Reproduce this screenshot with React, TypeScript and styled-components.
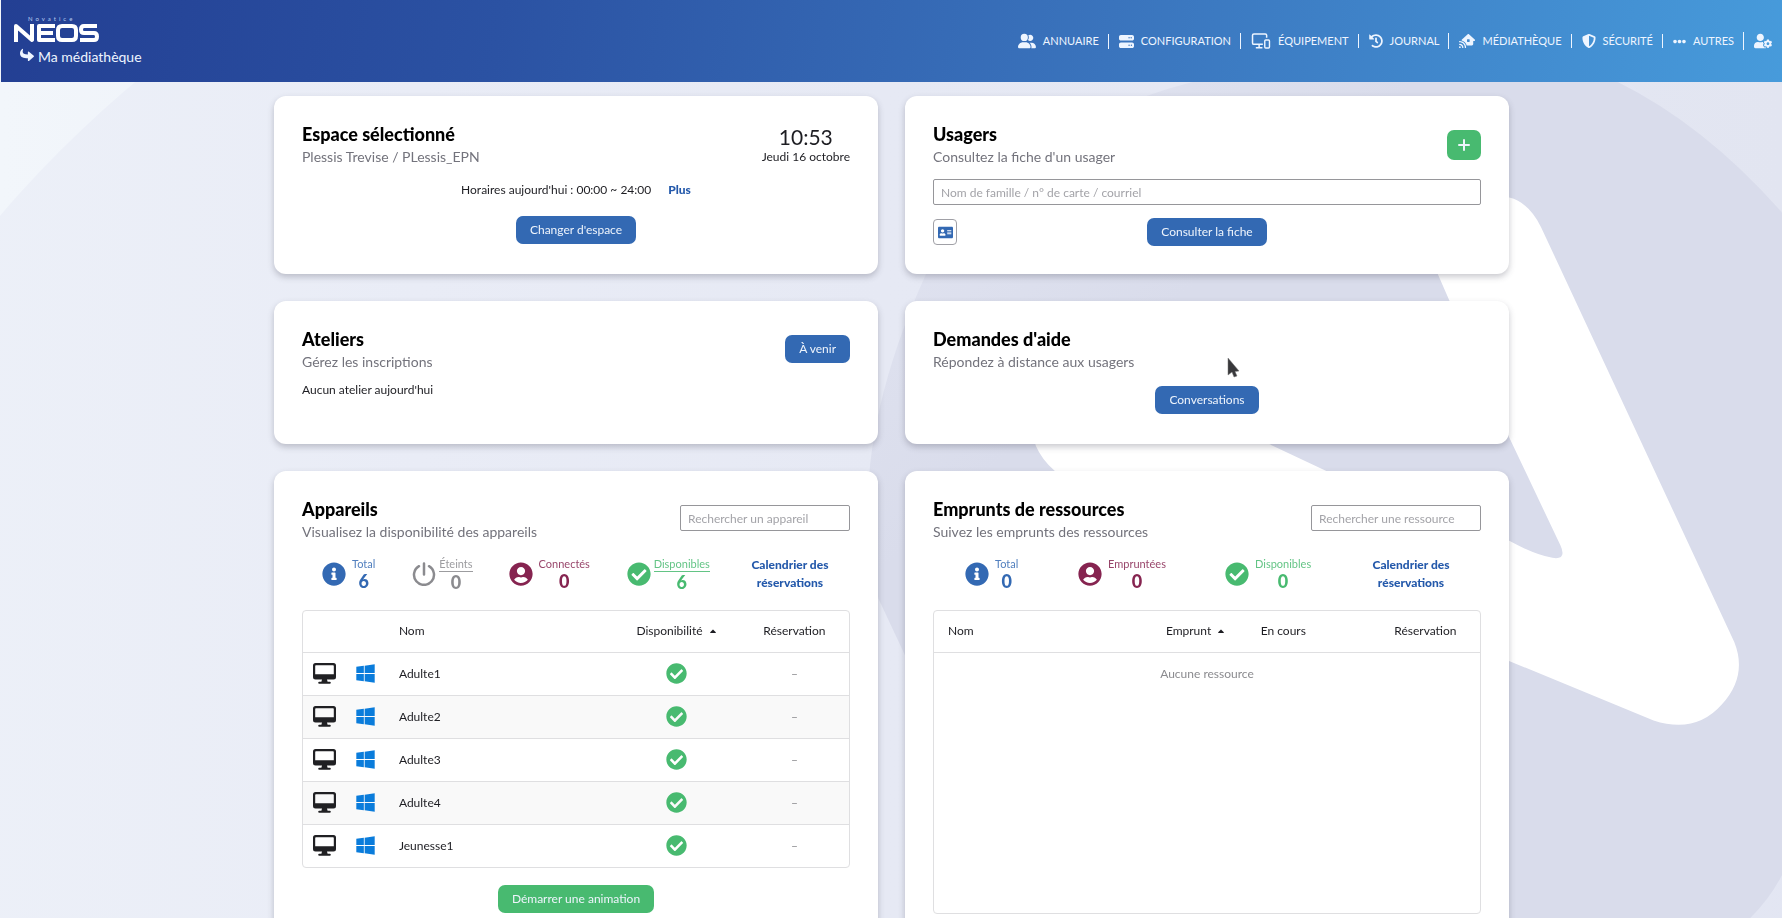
import React from 'react';
import styled, { createGlobalStyle, css } from 'styled-components';
import {
  FaHistory, FaShieldAlt, FaEllipsisH, FaUserCog, FaShare, FaInfoCircle,
  FaUserCircle, FaCheckCircle, FaWindows, FaAddressCard, FaCaretUp,
} from 'react-icons/fa';
import { FaHouseSignal, FaServer, FaUserGroup } from 'react-icons/fa6';

const color = {
  blue: '#3369b3', link: '#2459ab', green: '#48ba70', wine: '#862450', grey: '#8b8b8f',
  text: '#1d1d22', muted: '#73737c', line: '#dfdfe1', win: '#0a7cdb',
};

const GlobalStyle = createGlobalStyle`
  *, *::before, *::after { box-sizing: border-box; }
  html, body { margin: 0; height: 100%; }
  body { font-family: Lato, "Open Sans", sans-serif; font-size: 12px; line-height: 18px; color: ${color.text}; background: #e4e7f2; }
  h2, p { margin: 0; }
  button, input { font: inherit; }
  a { text-decoration: none; }
`;

const Page = styled.div`
  position: relative;
  height: 100vh;
  overflow-y: auto;
  scrollbar-width: none;
  isolation: isolate;
  border-left: 1px solid #a9b3cd;
`;
const Backdrop = styled.svg`
  position: fixed;
  inset: 0;
  width: 100%;
  height: 100%;
  z-index: -1;
`;
const Header = styled.header`
  display: flex;
  justify-content: space-between;
  min-height: 82px;
  padding: 15px 1px 12px 12px;
  color: #eef5ff;
  background: linear-gradient(100deg, #233f93 0%, #2b52a3 28%, #3a74bd 62%, #479bdb 100%);
`;
const Brand = styled.div`
  display: flex;
  flex-direction: column;
  gap: 3px;
`;
const Home = styled.a`
  display: flex;
  align-items: center;
  gap: 4px;
  padding-left: 7px;
  font-size: 14px;
  line-height: 20px;
  color: inherit;
  svg { transform: scaleY(-1); margin-bottom: 4px; }
`;
const Logo = styled.svg`
  width: 88px;
  height: 29px;
`;
const Nav = styled.nav`
  display: flex;
  align-items: center;
  align-self: flex-start;
  height: 52px;
  font-size: 11px;
`;
const NavLink = styled.a`
  display: flex;
  align-items: center;
  gap: 7px;
  padding: 0 9px 0 10px;
  color: inherit;
  line-height: 14px;
  white-space: nowrap;
  & + & { border-left: 1px solid #eef5ff; }
  svg { flex: none; }
`;

const Board = styled.main`
  display: grid;
  grid-template-columns: 1fr 1fr;
  gap: 27px;
  max-width: 1235px;
  margin: 0 auto;
  padding: 14px 0 28px;
`;
const Card = styled.section<{ $min: number }>`
  display: flex;
  flex-direction: column;
  min-width: 0;
  min-height: ${p => p.$min}px;
  padding: 28px;
  border-radius: 12px;
  background: #fff;
  box-shadow: 0 3px 6px rgba(60, 60, 80, .28);
`;
const CardHead = styled.div`
  display: flex;
  justify-content: space-between;
  align-items: flex-start;
`;
const HeadAction = styled.div`
  padding-top: 6px;
`;
const Title = styled.h2`
  font-size: 18px;
  line-height: 20px;
  font-weight: 900;
  color: #000;
`;
const Subtitle = styled.p`
  font-size: 14px;
  line-height: 26px;
  color: ${color.muted};
`;
const Clock = styled.div`
  padding-top: 2px;
  text-align: center;
`;
const Time = styled.div`
  font-size: 21px;
  line-height: 22px;
`;
const Hours = styled.p`
  display: flex;
  justify-content: center;
  gap: 17px;
  margin-top: 10px;
  line-height: 20px;
`;
const Center = styled.div<{ $top: number }>`
  display: flex;
  justify-content: center;
  margin-top: ${p => p.$top}px;
`;
const Button = styled.button<{ $tone?: string }>`
  height: 28px;
  padding: 0 14px;
  border: 0;
  border-radius: 7px;
  color: #eef4fc;
  background: ${p => p.$tone || color.blue};
`;
const AddButton = styled(Button)`
  display: grid;
  place-items: center;
  width: 34px;
  height: 30px;
  padding: 0;
`;
const BoldLink = styled.a`
  font-weight: 900;
  color: ${color.link};
  text-align: center;
`;
const Field = styled.input<{ $width?: number }>`
  display: block;
  width: ${p => (p.$width ? p.$width + 'px' : '100%')};
  height: 26px;
  padding: 0 7px;
  border: 1px solid #96969a;
  border-radius: 2px;
  background: #fff;
  &::placeholder { color: #a3a3a8; opacity: 1; }
`;
const UserForm = styled.form`
  display: grid;
  grid-template-columns: 1fr auto 1fr;
  align-items: center;
  gap: 13px 0;
  margin-top: 9px;
  ${Field} { grid-column: 1 / -1; }
`;
const ScanButton = styled.button`
  display: grid;
  place-items: center;
  width: 24px;
  height: 26px;
  padding: 0;
  border: 1px solid #a0a0a6;
  border-radius: 4px;
  color: ${color.blue};
  background: #fff;
  font-size: 15px;
`;
const Note = styled.p`
  margin-top: 6px;
`;

const Stats = styled.div<{ $columns: string; $start: number }>`
  display: grid;
  grid-template-columns: ${p => p.$columns};
  align-items: center;
  margin-top: 11px;
  padding-left: ${p => p.$start}px;
`;
const Stat = styled.div<{ $tone: string; $underline?: boolean }>`
  display: flex;
  align-items: center;
  gap: ${p => (p.$underline ? 3 : 6)}px;
  color: ${p => p.$tone};
  svg { font-size: 24px; flex: none; }
  dl { margin: 0; text-align: center; }
  dt { font-size: 11px; line-height: 14px; ${p => p.$underline && css`border-bottom: 1px solid;`} opacity: .85; }
  dd { margin: 0; font-size: 18px; line-height: 20px; font-weight: 900; }
`;
const TableBox = styled.div<{ $min?: number }>`
  margin-top: 18px;
  min-height: ${p => p.$min || 0}px;
  border: 1px solid ${color.line};
  border-radius: 4px;
`;
const Table = styled.table`
  width: 100%;
  border-collapse: collapse;
  table-layout: fixed;
  th, td { height: 43px; padding: 0; font-weight: 400; text-align: left; }
  thead th { height: 41px; }
  tbody tr:nth-child(even) { background: #f9f9f9; }
  tr + tr td, tbody tr:first-child td { border-top: 1px solid ${color.line}; }
`;
const Cell = styled.td<{ $faint?: boolean }>`
  && { text-align: center; }
  ${p => p.$faint && css`color: ${color.grey};`}
  svg { display: block; margin: 0 auto; }
`;
const Head = styled.th<{ $left?: number }>`
  ${p => (p.$left === undefined ? css`&& { text-align: center; }` : css`&& { padding-left: ${p.$left}px; }`)}
  svg { margin-left: 2px; font-size: 10px; vertical-align: -1px; }
`;
const Pointer = styled.svg`
  position: fixed;
  left: 1227px;
  top: 357px;
  width: 13px;
  height: 21px;
`;

const Screen = () => (
  <svg width="23" height="21" viewBox="0 0 23 21" fill="#202023" aria-label="Ordinateur">
    <path fillRule="evenodd" d="M2.5 0h18A2.5 2.5 0 0 1 23 2.500v11.500a2.500 2.500 0 0 1-2.500 2.500H14l.6 2.300h2.200a1 1 0 0 1 0 2H6.200a1 1 0 0 1 0-2h2.200l.6-2.300H2.500A2.500 2.500 0 0 1 0 14V2.500A2.500 2.500 0 0 1 2.500 0ZM3 2.200a.8.8 0 0 0-.8.8v8.300h18.600V3a.8.8 0 0 0-.8-.8Z" />
  </svg>
);
const Devices = () => (
  <svg width="20" height="16" viewBox="0 0 20 17" fill="none" stroke="currentColor" strokeWidth="1.600">
    <path d="M12 12H2.500A1.500 1.500 0 0 1 1 10.500v-8A1.500 1.500 0 0 1 2.500 1h12A1.500 1.500 0 0 1 16 2.500V5M8 12v3.500M4.500 15.800h7" />
    <rect x="14" y="7.500" width="5" height="8.500" rx="1" strokeWidth="1.500" />
  </svg>
);
const Power = () => (
  <svg width="24" height="24" viewBox="0 0 24 24" fill="none" stroke="currentColor" strokeWidth="2.500" strokeLinecap="round">
    <path d="M12 1.500v11M7 4.200a10 10 0 1 0 10 0" />
  </svg>
);
const Plus = () => (
  <svg width="12" height="12" viewBox="0 0 12 12" fill="none" stroke="currentColor" strokeWidth="2" strokeLinecap="round">
    <path d="M6 1v10M1 6h10" />
  </svg>
);

const navItems = [
  { label: 'ANNUAIRE', icon: <FaUserGroup size={18} /> },
  { label: 'CONFIGURATION', icon: <FaServer size={15} /> },
  { label: 'ÉQUIPEMENT', icon: <Devices /> },
  { label: 'JOURNAL', icon: <FaHistory size={14} /> },
  { label: 'MÉDIATHÈQUE', icon: <FaHouseSignal size={16} /> },
  { label: 'SÉCURITÉ', icon: <FaShieldAlt size={14} /> },
  { label: 'AUTRES', icon: <FaEllipsisH size={13} /> },
];
const devices = ['Adulte1', 'Adulte2', 'Adulte3', 'Adulte4', 'Jeunesse1'];

function StatItem({ icon, label, value, tone, underline }: {
  icon: React.ReactNode; label: string; value: number; tone: string; underline?: boolean;
}) {
  return (
    <Stat $tone={tone} $underline={underline}>
      {icon}
      <dl><dt>{label}</dt><dd>{value}</dd></dl>
    </Stat>
  );
}

function Heading({ title, subtitle }: { title: string; subtitle: string }) {
  return <div><Title>{title}</Title><Subtitle>{subtitle}</Subtitle></div>;
}

export default function App() {
  return (
    <Page>
      <GlobalStyle />
      <Backdrop viewBox="0 0 1568 808" preserveAspectRatio="xMidYMid slice" aria-hidden="true">
        <defs>
          <linearGradient id="base"><stop stopColor="#f2f6fb" /><stop offset=".5" stopColor="#e8ebf5" /><stop offset="1" stopColor="#e2e5f1" /></linearGradient>
          <linearGradient id="disc"><stop stopColor="#eef2f9" /><stop offset=".3" stopColor="#e9ecf6" /><stop offset=".5" stopColor="#e6e9f4" /><stop offset="1" stopColor="#e2e5f2" /></linearGradient>
          <linearGradient id="shade" x1="0" y1="0" x2=".3" y2=".3"><stop stopColor="#e3e6f2" /><stop offset="1" stopColor="#d9dceb" /></linearGradient>
        </defs>
        <rect width="1568" height="808" fill="url(#base)" />
        <circle cx="776" cy="855" r="1022" fill="url(#disc)" />
        <path fill="url(#shade)" d="M820 230Q740 400 773 527L796 576Q900 750 1100 808H1540Q1558 790 1568 770V187Q1500 110 1423 72H1050Q900 110 820 230Z" />
        <path fill="#fff" d="M1265 241L1328 385L1373 480Q1379 493 1366 491Q1350 488 1328 476L1168 415L1115 390L1000 345Q920 320 908 365Q904 398 935 420L1455 634Q1492 646 1515 620Q1538 595 1526 565L1356 200Q1345 178 1328 174L1240 180Z" />
      </Backdrop>

      <Header>
        <Brand>
          <Logo viewBox="0 0 88 29" role="img" aria-label="Novatice NEOS">
            <text x="15" y="6" fontSize="6" letterSpacing="3" fill="#b9cdf0" fontFamily="Lato, sans-serif">Novatice</text>
            <g fill="none" stroke="#fff" strokeWidth="4" strokeLinejoin="round">
              <path d="M3 27V11l16 14V9M42 11H26v14h16M26 18h14M49 11h10q4 0 4 4v6q0 4-4 4H49q-4 0-4-4v-6q0-4 4-4ZM84 11H71q-3 0-3 3.500t3 3.500h10q3 0 3 3.500t-3 3.500H67" />
            </g>
          </Logo>
          <Home href="#"><FaShare />Ma médiathèque</Home>
        </Brand>
        <Nav>
          {navItems.map(i => <NavLink href="#" key={i.label}>{i.icon}{i.label}</NavLink>)}
          <NavLink href="#" aria-label="Mon compte"><FaUserCog size={18} /></NavLink>
        </Nav>
      </Header>

      <Board>
        <Card $min={178}>
          <CardHead>
            <Heading title="Espace sélectionné" subtitle="Plessis Trevise / PLessis_EPN" />
            <Clock><Time>10:53</Time>Jeudi 16 octobre</Clock>
          </CardHead>
          <Hours>Horaires aujourd'hui : 00:00 ~ 24:00 <BoldLink href="#">Plus</BoldLink></Hours>
          <Center $top={16}><Button>Changer d'espace</Button></Center>
        </Card>

        <Card $min={178}>
          <CardHead>
            <Heading title="Usagers" subtitle="Consultez la fiche d'un usager" />
            <HeadAction><AddButton $tone={color.green} aria-label="Ajouter un usager"><Plus /></AddButton></HeadAction>
          </CardHead>
          <UserForm onSubmit={e => e.preventDefault()}>
            <Field aria-label="Usager" placeholder="Nom de famille / n° de carte / courriel" />
            <ScanButton type="button" aria-label="Scanner une carte"><FaAddressCard /></ScanButton>
            <Button>Consulter la fiche</Button>
          </UserForm>
        </Card>

        <Card $min={143}>
          <CardHead>
            <Heading title="Ateliers" subtitle="Gérez les inscriptions" />
            <HeadAction><Button>À venir</Button></HeadAction>
          </CardHead>
          <Note>Aucun atelier aujourd'hui</Note>
        </Card>

        <Card $min={143}>
          <CardHead><Heading title="Demandes d'aide" subtitle="Répondez à distance aux usagers" /></CardHead>
          <Center $top={11}><Button>Conversations</Button></Center>
        </Card>

        <Card $min={470}>
          <CardHead>
            <Heading title="Appareils" subtitle="Visualisez la disponibilité des appareils" />
            <HeadAction><Field $width={170} aria-label="Rechercher un appareil" placeholder="Rechercher un appareil" /></HeadAction>
          </CardHead>
          <Stats $columns="91fr 97fr 119fr 104fr 121fr" $start={20}>
            <StatItem icon={<FaInfoCircle />} label="Total" value={6} tone={color.blue} />
            <StatItem icon={<Power />} label="Éteints" value={0} tone={color.grey} underline />
            <StatItem icon={<FaUserCircle />} label="Connectés" value={0} tone={color.wine} />
            <StatItem icon={<FaCheckCircle />} label="Disponibles" value={6} tone={color.green} underline />
            <BoldLink href="#">Calendrier des<br />réservations</BoldLink>
          </Stats>
          <TableBox>
            <Table>
              <colgroup><col width="8%" /><col width="7%" /><col width="42%" /><col width="23%" /><col width="20%" /></colgroup>
              <thead>
                <tr><Head aria-label="Type" /><Head aria-label="Système" /><Head $left={14}>Nom</Head><Head>Disponibilité <FaCaretUp /></Head><Head>Réservation</Head></tr>
              </thead>
              <tbody>
                {devices.map(name => (
                  <tr key={name}>
                    <Cell><Screen /></Cell>
                    <Cell><FaWindows size={21} color={color.win} /></Cell>
                    <Head as="td" $left={14}>{name}</Head>
                    <Cell><FaCheckCircle size={21} color={color.green} /></Cell>
                    <Cell $faint>–</Cell>
                  </tr>
                ))}
              </tbody>
            </Table>
          </TableBox>
          <Center $top={17}><Button $tone={color.green}>Démarrer une animation</Button></Center>
        </Card>

        <Card $min={470}>
          <CardHead>
            <Heading title="Emprunts de ressources" subtitle="Suivez les emprunts des ressources" />
            <HeadAction><Field $width={170} aria-label="Rechercher une ressource" placeholder="Rechercher une ressource" /></HeadAction>
          </CardHead>
          <Stats $columns="113fr 147fr 116fr 140fr" $start={32}>
            <StatItem icon={<FaInfoCircle />} label="Total" value={0} tone={color.blue} />
            <StatItem icon={<FaUserCircle />} label="Empruntées" value={0} tone={color.wine} />
            <StatItem icon={<FaCheckCircle />} label="Disponibles" value={0} tone={color.green} />
            <BoldLink href="#">Calendrier des<br />réservations</BoldLink>
          </Stats>
          <TableBox $min={304}>
            <Table>
              <colgroup><col width="38%" /><col width="20%" /><col width="22%" /><col width="20%" /></colgroup>
              <thead>
                <tr><Head $left={14}>Nom</Head><Head>Emprunt <FaCaretUp /></Head><Head $left={10}>En cours</Head><Head>Réservation</Head></tr>
              </thead>
              <tbody>
                <tr><Cell $faint colSpan={4}>Aucune ressource</Cell></tr>
              </tbody>
            </Table>
          </TableBox>
        </Card>
      </Board>
      <Pointer viewBox="0 0 13 21" aria-hidden="true">
        <path d="M1 1L12 14L8 14.500L10 19L7 20L5 15L1 18Z" fill="#38383b" stroke="#777" strokeWidth=".5" />
      </Pointer>
    </Page>
  );
}
